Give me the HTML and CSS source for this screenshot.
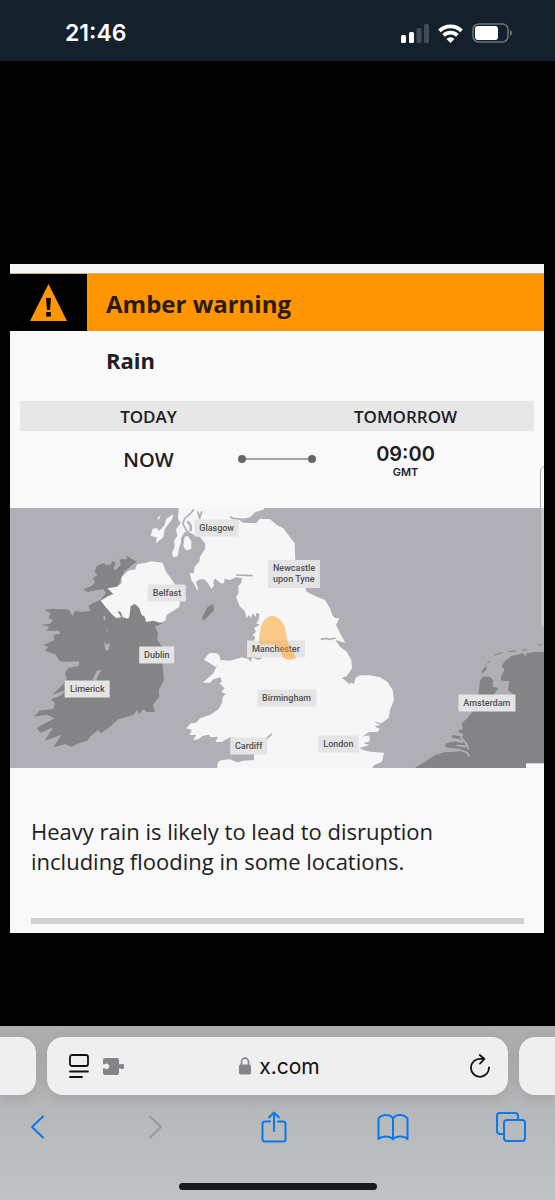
FILE: index.html
```html
<!DOCTYPE html>
<html lang="en">
<head>
    <meta charset="UTF-8">
    <meta name="viewport" content="width=device-width, initial-scale=1.0">
    <title>Amber warning - Rain</title>
    <link rel="stylesheet" href="styles.css">
</head>
<body>

    <header class="status-bar">
        <div class="clock">21:46</div>
        <div class="status-icons">
            <svg width="28" height="19" viewBox="0 0 28 19" fill="#fff">
                <rect x="0" y="11" width="5" height="8" rx="1.5"/>
                <rect x="8" y="8" width="5" height="11" rx="1.5"/>
                <rect x="15.500" y="4" width="5" height="15" rx="1.500" opacity=".2"/>
                <rect x="23" y="0" width="5" height="19" rx="1.5" opacity=".2"/>
            </svg>
            <svg width="25" height="19" viewBox="0 0 25 19" fill="none" stroke="#fff" stroke-width="3.8">
                <path d="M1.500 6.800A16 16 0 0 1 23.500 6.800"/>
                <path d="M5.600 11.300A10 10 0 0 1 19.400 11.300"/>
                <path d="M12.500 19L8.500 15A5.400 5.400 0 0 1 16.500 15Z" fill="#fff" stroke="none"/>
            </svg>
            <svg width="41" height="20" viewBox="0 0 41 20">
                <rect x="1" y="1" width="35" height="18" rx="5.500" fill="none" stroke="#6b747b" stroke-width="1.5"/>
                <rect x="3" y="3" width="23" height="14" rx="3" fill="#fff"/>
                <path d="M38 7Q40 7.500 40 10T38 13Z" fill="#6b747b"/>
            </svg>
        </div>
    </header>

    <main class="viewer">
        <article class="card">
            <div class="card-header">
                <div class="warning-icon">
                    <svg width="37" height="37" viewBox="0 0 37 37">
                        <path d="M18.500 0L37 37H0Z" fill="#ff9500"/>
                        <path d="M16 14H21L20 26H17ZM16.200 28H20.800V32.400H16.200Z" fill="#000"/>
                    </svg>
                </div>
                <h1>Amber warning</h1>
            </div>
            <h2>Rain</h2>

            <div class="times">
                <table>
                    <thead>
                        <tr><th>TODAY</th><th>TOMORROW</th></tr>
                    </thead>
                    <tbody>
                        <tr><td>NOW</td><td class="end">09:00<small>GMT</small></td></tr>
                    </tbody>
                </table>
                <div class="time-line"></div>
            </div>

            <div class="map">
                <svg viewBox="0 0 1602 780" preserveAspectRatio="none">
                    <!-- Ireland -->
                    <g transform="translate(-30 -24)">
                        <path fill="#848486" d="M410 185L394 176L378 165L383 177L372 178L358 178L362 195L348 210L340 206L347 188L335 182L334 193L320 195L310 190L290 198L284 215L292 225L278 235L286 245L275 258L250 268L262 276L290 270L310 268L318 278L302 300L280 308L265 318L272 332L245 336L225 332L218 348L207 330L195 328L180 328L160 326L132 330L152 340L145 355L160 360L150 372L122 374L148 380L140 392L178 392L180 402L160 404L163 420L130 436L145 440L135 452L155 460L165 462L180 484L200 485L238 484L236 498L205 504L195 520L200 535L190 552L156 585L180 576L200 570L180 588L152 597L165 610L160 627L118 632L102 650L140 644L165 655L130 672L110 685L122 698L160 682L134 722L185 704L160 742L195 732L215 740L240 728L262 722L272 708L295 690L302 700L330 680L355 658L400 645L410 630L418 642L430 628L440 636L465 636L458 615L478 590L476 570L492 540L488 500L486 440L472 420L474 400L464 380L488 370L440 340L400 300L350 270L372 215Z"/>
                        <path fill="#f6f6f6" d="M384 212L404 208L412 192L432 190L455 184L488 188L498 215L520 245L526 258L560 300L540 302L538 320L520 332L500 345L496 362L480 368L460 362L438 366L434 350L425 345L418 325L405 312L392 318L388 350L384 356L368 352L362 336L352 333L364 352L348 354L335 342L320 325L302 302L325 288L340 282L322 265L350 260L365 250L364 232Z"/>
                        <path fill="#b0afb6" d="M310 348L316 349L316 362L311 360ZM318 388L324 390L322 396ZM312 422L318 432L330 430L326 450L316 452ZM276 540L286 522L290 512L304 510L294 528L288 542ZM384 210L396 196L410 192L406 208Z"/>
                        <path fill="#848486" d="M640 313L642 330L622 352L608 362L607 350L622 322Z"/>
                        <path fill="#f6f6f6" d="M520 42L516 58L494 88L490 112L468 130L470 112L452 108L458 86L470 84L478 92L494 76L498 58ZM472 54L482 46L476 60Z"/>
                    </g>
                    <!-- Great Britain -->
                    <g transform="translate(420 -24)">
                        <path fill="#f6f6f6" d="M86 24L84 56L92 70L78 88L82 108L72 122L74 140L66 160L70 172L84 168L86 150L92 130L94 112L104 96L122 100L150 112L165 130L166 145L150 170L148 185L134 200L131 220L119 218L124 240L136 258L142 272L144 265L138 245L150 238L162 238L174 250L184 266L192 258L190 242L196 236L212 250L222 250L224 236L240 240L258 232L276 234L274 248L265 258L266 280L258 292L270 320L284 332L290 355L296 345L304 354L308 338L316 350L320 338L328 342L326 360L318 370L330 374L312 384L318 395L308 405L316 412L310 425L312 470L304 478L303 486L296 478L276 472L240 482L215 480L200 498L190 520L158 548L180 548L190 538L212 532L215 545L208 550L224 565L214 575L227 582L218 592L216 610L205 628L180 645L150 655L138 668L122 670L108 685L126 690L118 705L138 704L130 720L145 718L158 708L176 704L182 712L204 710L196 726L215 726L240 712L300 720L345 716L364 700L368 703L352 718L340 738L312 762L312 780L280 782L262 787L240 778L216 780L204 785L202 804L668 804L672 796L696 785L702 758L660 755L640 750L628 744L658 735L640 730L660 724L658 706L636 710L658 696L682 696L690 688L672 678L692 676L670 664L694 670L716 654L720 630L732 600L728 570L712 545L690 532L660 526L630 526L616 534L612 552L604 548L598 552L576 534L590 528L606 505L604 480L590 455L570 440L556 420L570 424L586 428L570 400L558 375L568 355L556 354L548 348L540 325L525 300L500 290L470 275L466 262L440 250L436 185L434 130L415 105L400 85L380 75L360 58L330 56L318 70L280 68L268 60L300 52L316 36L344 28L340 24Z"/>
                        <path fill="#f6f6f6" d="M104 110L114 108L124 124V146L110 152L100 140ZM172 466L180 459L200 460L208 466L214 488L195 500L178 488L162 480Z"/>
                        <g fill="none" stroke="#b0afb6" stroke-width="5">
                            <path d="M132 28L120 42L104 56L98 70L110 92L126 110"/>
                            <path d="M142 34L150 50L156 34M146 44L150 58"/>
                            <path d="M112 64L122 76V94" stroke-width="7"/>
                            <path d="M240 50L252 56L280 58L312 54M258 225L308 227M512 418L526 415L540 418L556 414M312 472L324 477L334 473"/>
                        </g>
                    </g>
                    <!-- Netherlands and Belgium -->
                    <g transform="translate(1110 -144)">
                        <path fill="#848486" d="M492 576L465 576L440 580L437 590L430 580L395 588L375 602L365 618L374 630L362 650L364 662L388 664L384 690L402 706L340 706L356 684L338 680L340 662L330 650L308 650L300 662L295 706L290 740L262 775L245 790L248 806L232 816L250 822L248 830L218 825L214 832L246 840L250 850L225 844L198 850L194 858L205 864L240 866L236 874L196 876L165 886L130 908L104 924H492Z"/>
                        <path fill="#848486" d="M318 616L320 628L308 640L304 636Z"/>
                        <path fill="none" stroke="#848486" stroke-width="3" d="M322 610L332 602M342 586L368 578M384 575L408 573M428 570L440 569M474 554H484"/>
                        <path fill="none" stroke="#b0afb6" stroke-width="5" d="M240 830L258 850L266 868M200 874L240 870L262 878L268 890M230 856L262 860M344 642L366 626"/>
                        <path fill="#f6f6f6" d="M438 910H492V924H438Z"/>
                    </g>
                </svg>
                <span class="label glasgow">Glasgow</span>
                <span class="label newcastle">Newcastle<br>upon Tyne</span>
                <span class="label belfast">Belfast</span>
                <span class="label dublin">Dublin</span>
                <span class="label manchester">Manchester</span>
                <span class="label limerick">Limerick</span>
                <span class="label birmingham">Birmingham</span>
                <span class="label amsterdam">Amsterdam</span>
                <span class="label cardiff">Cardiff</span>
                <span class="label london">London</span>
                <!-- warning area -->
                <svg viewBox="0 0 1602 780" preserveAspectRatio="none">
                    <path transform="translate(420 -24)" fill="#ff9d1c" fill-opacity=".5" d="M328 432C327 390 336 348 367 348C390 350 408 376 408 400C412 440 432 455 438 474C426 482 410 482 400 474C394 462 390 446 378 438C364 430 344 436 328 432Z"/>
                </svg>
            </div>

            <p>Heavy rain is likely to lead to disruption including flooding in some locations.</p>
            <hr>
            <div class="scroll-thumb"></div>
        </article>
    </main>

    <footer class="browser-bar">
        <div class="tabs">
            <div class="tab-edge left"></div>
            <div class="address-bar">
                <div class="page-tools">
                    <button aria-label="Page menu">
                        <svg width="20" height="25" viewBox="0 0 20 25" fill="none" stroke="#111" stroke-width="1.8" stroke-linecap="round">
                            <rect x="1" y="1" width="18" height="11" rx="2"/>
                            <path d="M1 17.500H19M1 23H13"/>
                        </svg>
                    </button>
                    <button aria-label="Extensions">
                        <svg width="21" height="17" viewBox="0 0 21 17" fill="#858589">
                            <path d="M2 0H14Q16 0 16 2V6Q17 7 17.500 6.300A2.600 2.600 0 1 1 17.500 10.500Q17 9.800 16 10.500V15Q16 17 14 17H2Q0 17 0 15V10.500Q1 9.800 1.800 10.500A2.700 2.700 0 1 0 1.800 6.300Q1 7 0 6V2Q0 0 2 0Z"/>
                        </svg>
                    </button>
                </div>
                <a class="site" href="#">
                    <svg width="12" height="18" viewBox="0 0 12 18">
                        <path d="M2.500 9V4.800A3.500 3.700 0 0 1 9.500 4.800V9" fill="none" stroke="#858589" stroke-width="1.6"/>
                        <rect y="7.500" width="12" height="10" rx="1.800" fill="#858589"/>
                    </svg>
                    x.com
                </a>
                <button aria-label="Reload">
                    <svg width="20" height="24" viewBox="0 0 20 24" fill="none" stroke="#111" stroke-width="1.8" stroke-linecap="round" stroke-linejoin="round">
                        <path d="M19 13.500A9 9 0 1 1 10 4.800H14M9.800 1L14.400 5L10 9.600"/>
                    </svg>
                </button>
            </div>
            <div class="tab-edge right"></div>
        </div>
        <nav class="toolbar">
            <button aria-label="Back">
                <svg width="15" height="24" viewBox="0 0 15 24"><path d="M13 1.500L2 12L13 22.500"/></svg>
            </button>
            <button aria-label="Forward" class="disabled">
                <svg width="15" height="24" viewBox="0 0 15 24"><path d="M2 1.500L13 12L2 22.500"/></svg>
            </button>
            <button aria-label="Share">
                <svg width="26" height="32" viewBox="0 0 26 32"><path d="M9 10.500H4Q1.500 10.500 1.500 13V28Q1.500 30.500 4 30.500H22Q24.500 30.500 24.500 28V13Q24.500 10.500 22 10.500H17M13 20V2M8 6.500L13 1.500L18 6.500"/></svg>
            </button>
            <button aria-label="Bookmarks">
                <svg width="32" height="27" viewBox="0 0 32 27"><path d="M16 25.500V4.500Q14 1 9 1Q4 1 1.500 4.500V25Q4 22.500 9 22.500Q14 22.500 16 25.500Q18 22.500 23 22.500Q28 22.500 30.500 25V4.500Q28 1 23 1Q18 1 16 4.500"/></svg>
            </button>
            <button aria-label="Tabs">
                <svg width="30" height="30" viewBox="0 0 30 30"><path d="M8 22H4Q1 22 1 19V4Q1 1 4 1H19Q22 1 22 4V8"/><rect x="8" y="8" width="21" height="21" rx="3"/></svg>
            </button>
        </nav>
        <div class="home-indicator"></div>
    </footer>

</body>
</html>
```
FILE: styles.css
```css
* {
    box-sizing: border-box;
}
body {
    font-family: "Open Sans", "Noto Sans", sans-serif;
    background: #000;
    color: #202022;
    margin: 0;
    min-height: 100vh;
    display: flex;
    flex-direction: column;
}
svg {
    display: block;
}
button {
    background: none;
    border: none;
    padding: 0;
    cursor: pointer;
}
.status-bar {
    background: #14202b;
    height: 61px;
    padding: 5px 42px 0 65px;
    display: flex;
    justify-content: space-between;
    align-items: center;
    color: #fff;
}
.clock {
    font-family: Inter, sans-serif;
    font-size: 23px;
    font-weight: 600;
}
.status-icons {
    display: flex;
    align-items: center;
    gap: 9px;
}
.viewer {
    flex: 1;
    padding: 203px 11px 93px 10px;
}
.card {
    background: #f9f9f9;
    border-top: 9px solid #f6f6f6;
    padding-bottom: 9px;
    position: relative;
    overflow: hidden;
}
.card-header {
    background: #ff9500;
    border-top: 1px solid #c9b48f;
    height: 58px;
    display: flex;
    align-items: center;
}
.warning-icon {
    background: #000;
    width: 77px;
    height: 100%;
    display: flex;
    align-items: center;
    justify-content: center;
}
h1 {
    margin: 0 0 0 19px;
    padding-top: 2px;
    font-size: 24px;
    font-weight: 700;
    color: #2a1c0c;
}
h2 {
    margin: 0 0 0 96px;
    padding: 13px 0 25px;
    font-size: 22px;
    line-height: 32px;
    font-weight: 700;
}
.times {
    position: relative;
    margin: 0 10px;
    height: 107px;
}
table {
    width: 100%;
    table-layout: fixed;
    border-collapse: collapse;
    text-align: center;
}
th {
    background: #e7e7e7;
    height: 30px;
    padding: 2px 0 0;
    font-size: 17px;
    line-height: 28px;
    font-weight: 600;
}
td {
    padding: 9px 0 0;
    font-size: 20px;
    line-height: 28px;
    font-weight: 600;
}
.end {
    font-family: Inter, sans-serif;
}
td small {
    display: block;
    margin-top: -4px;
    font-size: 11px;
    line-height: 16px;
}
.time-line {
    position: absolute;
    top: 57px;
    left: 50%;
    width: 70px;
    height: 2px;
    margin-left: -35px;
    background: #a4a4a6;
}
.time-line::before,
.time-line::after {
    content: "";
    position: absolute;
    top: -3px;
    left: -4px;
    width: 8px;
    height: 8px;
    border-radius: 50%;
    background: #666;
}
.time-line::after {
    left: auto;
    right: -4px;
}
.map {
    position: relative;
    height: 260px;
    background: #b0afb6;
}
.map svg {
    position: absolute;
    width: 100%;
    height: 100%;
}
.label {
    position: absolute;
    transform: translate(-50%, -50%);
    background: #e4e4e4;
    color: #505052;
    padding: 3px 5px;
    font-family: Roboto, sans-serif;
    font-size: 9px;
    line-height: 11px;
    font-weight: 500;
    white-space: nowrap;
}
.glasgow { left: 38.7%; top: 7.6%; }
.newcastle { left: 53.2%; top: 25.2%; }
.belfast { left: 29.4%; top: 32.6%; }
.dublin { left: 27.5%; top: 56.6%; }
.manchester { left: 49.8%; top: 54.2%; }
.limerick { left: 14.5%; top: 69.7%; }
.birmingham { left: 51.8%; top: 73.2%; }
.amsterdam { left: 89.3%; top: 75.1%; }
.cardiff { left: 44.7%; top: 91.4%; }
.london { left: 61.5%; top: 90.9%; }
p {
    margin: 48px 70px 42px 21px;
    font-size: 22px;
    line-height: 30px;
}
hr {
    margin: 0 20px 0 21px;
    height: 6px;
    border: none;
    background: #d1d1d1;
}
.scroll-thumb {
    position: absolute;
    top: 193px;
    right: -8px;
    width: 12px;
    height: 162px;
    border: 1px solid #a9a9ab;
    border-radius: 5px;
    background: rgba(255, 255, 255, .3);
}
.browser-bar {
    height: 174px;
    padding-top: 11px;
    background: linear-gradient(#acacad, #b6b7b9 45%, #bfc2c6);
    position: relative;
    overflow: hidden;
}
.tabs {
    display: flex;
    gap: 11px;
    height: 58px;
}
.tab-edge,
.address-bar {
    background: #efefef;
    border-radius: 16px;
    box-shadow: 0 4px 14px rgba(0, 0, 0, .1);
}
.tab-edge {
    width: 36px;
}
.tab-edge.left {
    border-radius: 0 16px 16px 0;
}
.tab-edge.right {
    border-radius: 16px 0 0 16px;
}
.address-bar {
    flex: 1;
    padding: 0 18px 0 22px;
    display: grid;
    grid-template-columns: 1fr auto 1fr;
    align-items: center;
}
.address-bar > button {
    justify-self: end;
}
.page-tools {
    display: flex;
    align-items: center;
    gap: 14px;
}
.site {
    display: flex;
    align-items: center;
    gap: 8px;
    color: #111;
    font-family: Inter, sans-serif;
    font-size: 21px;
    text-decoration: none;
}
.toolbar {
    display: flex;
    justify-content: space-between;
    align-items: center;
    height: 64px;
    padding: 0 28px 0 21px;
}
.toolbar button {
    width: 32px;
    display: flex;
    justify-content: center;
}
.toolbar svg {
    fill: none;
    stroke: #0a7aea;
    stroke-width: 2;
    stroke-linecap: round;
    stroke-linejoin: round;
}
.toolbar .disabled svg {
    stroke: #98999b;
}
.home-indicator {
    position: absolute;
    bottom: 10px;
    left: 50%;
    width: 198px;
    height: 7px;
    margin-left: -99px;
    border-radius: 4px;
    background: #1a1a1c;
}
```
